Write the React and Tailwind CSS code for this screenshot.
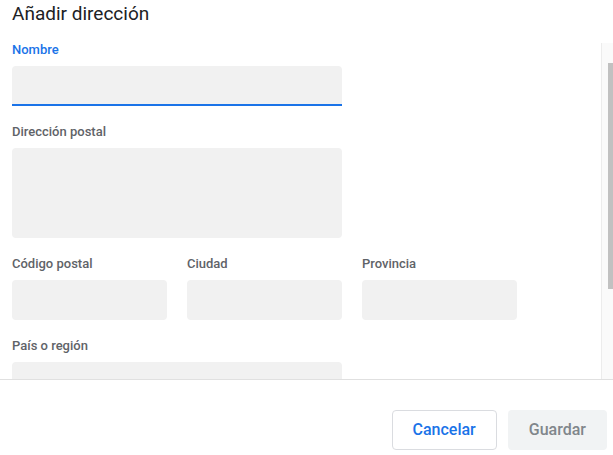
const FIELDS_ROW = [
  { label: 'Código postal' },
  { label: 'Ciudad' },
  { label: 'Provincia' },
]

function Label({ children, active }) {
  return (
    <div className={`text-[13px] leading-4 font-medium ${active ? 'text-[#1a73e8]' : 'text-[#5f6368]'}`}>
      {children}
    </div>
  )
}

export default function App() {
  return (
    <div className="w-[613px] h-[455px] bg-white overflow-hidden font-['Roboto',_'Liberation_Sans',_sans-serif]">
      {/* Title */}
      <h1 className="px-3 text-[19px] leading-7 font-normal text-[#202124]">Añadir dirección</h1>

      {/* Scroll area */}
      <div className="mt-3 h-[340px] flex border-b border-[#e0e0e0]">
        <div className="flex-1 overflow-hidden pl-3 pt-[2px]">
          <div className="grid grid-cols-[155px_155px_155px] gap-x-5">
            <div className="col-span-3">
              <Label active>Nombre</Label>
              <div className="mt-2 w-[330px] h-10 bg-[#f1f1f1] rounded-t-[4px] border-b-2 border-[#1a73e8]" />
            </div>

            <div className="col-span-3 mt-[18px]">
              <Label>Dirección postal</Label>
              <div className="mt-2 w-[330px] h-[90px] bg-[#f1f1f1] rounded-[4px]" />
            </div>

            {FIELDS_ROW.map(f => (
              <div key={f.label} className="mt-[18px]">
                <Label>{f.label}</Label>
                <div className="mt-2 h-10 bg-[#f1f1f1] rounded-[4px]" />
              </div>
            ))}

            <div className="col-span-3 mt-[18px]">
              <Label>País o región</Label>
              <div className="mt-2 w-[330px] h-10 bg-[#f1f1f1] rounded-[4px]" />
            </div>
          </div>
        </div>

        {/* Scrollbar */}
        <div className="w-[12px] mt-[3px] bg-[#fafafa] border-l border-[#ececec]">
          <div className="mt-[20px] ml-[6px] h-[226px] bg-[#c1c1c1]" />
        </div>
      </div>

      {/* Footer */}
      <div className="flex justify-end gap-[11px] pt-[30px] pr-[6px]">
        <button className="h-10 px-5 rounded-[4px] border border-[#dadce0] bg-white text-[16px] font-medium text-[#1a73e8]">
          Cancelar
        </button>
        <button className="h-10 px-5 rounded-[4px] border border-transparent bg-[#f1f3f4] text-[16px] font-medium text-[#80868b]">
          Guardar
        </button>
      </div>
    </div>
  )
}
